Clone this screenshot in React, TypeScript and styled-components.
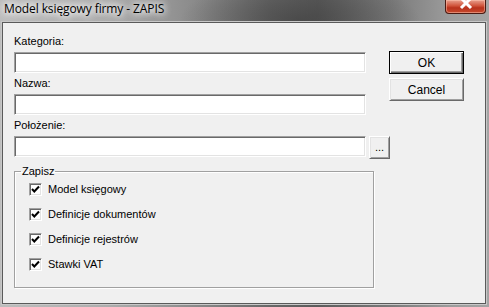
import styled, { createGlobalStyle } from 'styled-components';

const GlobalStyle = createGlobalStyle`
    html, body {
        margin: 0;
        padding: 0;
        width: 489px;
        height: 307px;
        overflow: hidden;
        background: #5a5a5a;
    }
    * {
        box-sizing: border-box;
    }
`;

const items = ['Model księgowy', 'Definicje dokumentów', 'Definicje rejestrów', 'Stawki VAT'];

const fields = ['Kategoria:', 'Nazwa:'];

const Check = () => (
    <svg width="9" height="9" viewBox="0 0 9 9">
        <polyline points="1,4 3.3,6.5 8,1.5" fill="none" stroke="#000" strokeWidth="2" />
    </svg>
);

const App = () => {
    return (
        <>
            <GlobalStyle />
            <Frame>
                <TitleBar>
                    <Title>Model księgowy firmy - ZAPIS</Title>
                    <CloseButton>
                        <svg width="14" height="10" viewBox="0 0 14 10">
                            <path d="M2 -2 L12 8 M12 -2 L2 8" stroke="#fff" strokeWidth="3" />
                        </svg>
                    </CloseButton>
                </TitleBar>
                <Client>
                    <FormColumn>
                        {fields.map((f) => (
                            <Field key={f}>
                                <Label>{f}</Label>
                                <TextBox />
                            </Field>
                        ))}
                        <Field>
                            <Label>Położenie:</Label>
                            <BrowseRow>
                                <TextBox />
                                <BrowseButton>...</BrowseButton>
                            </BrowseRow>
                        </Field>
                        <GroupBox>
                            <Legend>Zapisz</Legend>
                            {items.map((item) => (
                                <CheckRow key={item}>
                                    <CheckBox>
                                        <Check />
                                    </CheckBox>
                                    <span>{item}</span>
                                </CheckRow>
                            ))}
                        </GroupBox>
                    </FormColumn>
                    <ButtonColumn>
                        <PushButton $default>OK</PushButton>
                        <PushButton>Cancel</PushButton>
                    </ButtonColumn>
                </Client>
            </Frame>
        </>
    );
};

const Frame = styled.div`
    width: 489px;
    height: 307px;
    display: flex;
    flex-direction: column;
    padding: 0 3px 3px 2px;
    background:
        radial-gradient(ellipse 120px 40px at 300px 20px, rgba(60, 60, 60, 0.6), transparent),
        linear-gradient(90deg, #bdbdbd 0%, #adadad 22%, #8a8a8a 40%, #686868 55%, #5c5c5c 65%, #7a7a7a 80%, #9c9c9c 92%, #a4a4a4 100%);
`;

const TitleBar = styled.div`
    height: 22px;
    display: flex;
    align-items: flex-start;
    flex-shrink: 0;
`;

const Title = styled.div`
    font-family: 'Open Sans', 'Noto Sans', sans-serif;
    font-size: 12px;
    line-height: 16px;
    padding: 1px 0 0 2px;
    color: #000;
    letter-spacing: -0.1px;
    text-shadow:
        0 0 6px #fff,
        0 0 8px #fff,
        0 0 10px rgba(255, 255, 255, 0.9);
`;

const CloseButton = styled.div`
    margin-left: auto;
    width: 41px;
    height: 14px;
    border: 1px solid #4a1a12;
    border-top: none;
    border-radius: 0 0 4px 4px;
    background: linear-gradient(180deg, #e8a08e 0%, #d0533a 45%, #b8321c 60%, #c64a2e 100%);
    box-shadow: inset 0 0 0 1px rgba(255, 200, 180, 0.5);
    display: flex;
    justify-content: center;
    align-items: flex-start;
`;

const Client = styled.div`
    flex: 1;
    display: flex;
    align-items: flex-start;
    background: #f0f0f0;
    border: 1px solid #5a5a5a;
    box-shadow: 0 0 0 1px #c8c8c8;
    padding: 12px 0 0 11px;
    font-family: 'Liberation Sans', Arial, sans-serif;
    font-size: 11px;
    color: #000;
`;

const FormColumn = styled.div`
    width: 376px;
    display: flex;
    flex-direction: column;
`;

const Field = styled.div`
    display: flex;
    flex-direction: column;
    margin-bottom: 4px;
`;

const Label = styled.div`
    line-height: 13px;
    height: 17px;
`;

const sunken = `
    border-style: solid;
    border-width: 1px;
    border-color: #a0a0a0 #ffffff #ffffff #a0a0a0;
    box-shadow: inset 1px 1px 0 #696969, inset -1px -1px 0 #e3e3e3;
    background: #fff;
`;

const TextBox = styled.div`
    ${sunken}
    width: 352px;
    height: 21px;
`;

const BrowseRow = styled.div`
    display: flex;
    gap: 3px;
    align-items: flex-start;
`;

const raised = `
    border-style: solid;
    border-width: 1px;
    border-color: #ffffff #696969 #696969 #ffffff;
    box-shadow: inset 1px 1px 0 #e3e3e3, inset -1px -1px 0 #a0a0a0;
    background: #f0f0f0;
`;

const BrowseButton = styled.div`
    ${raised}
    width: 21px;
    height: 23px;
    display: flex;
    align-items: flex-end;
    justify-content: center;
    padding-bottom: 5px;
    line-height: 11px;
`;

const GroupBox = styled.fieldset`
    width: 360px;
    height: 123px;
    margin: 2px 0 0 0;
    padding: 5px 0 0 0;
    border: 1px solid #a0a0a0;
    box-shadow: 1px 1px 0 #fff, inset 1px 1px 0 #fff;
    display: flex;
    flex-direction: column;
    gap: 12px;
`;

const Legend = styled.legend`
    padding: 0 1px;
    margin-left: 6px;
    line-height: 13px;
`;

const CheckRow = styled.div`
    display: flex;
    align-items: center;
    gap: 6px;
    height: 13px;
    line-height: 13px;
    padding-left: 14px;
`;

const CheckBox = styled.div`
    ${sunken}
    width: 13px;
    height: 13px;
    display: flex;
    align-items: center;
    justify-content: center;
`;

const ButtonColumn = styled.div`
    display: flex;
    flex-direction: column;
    gap: 4px;
    padding-top: 16px;
    margin-left: -1px;
`;

const PushButton = styled.div<{ $default?: boolean }>`
    ${raised}
    width: 75px;
    height: 23px;
    display: flex;
    align-items: center;
    justify-content: center;
    font-size: 12px;
    ${({ $default }) =>
        $default &&
        `
        border-color: #000;
        box-shadow: inset 1px 1px 0 #fff, inset -1px -1px 0 #696969, inset -2px -2px 0 #a0a0a0;
    `}
`;

export default App;
